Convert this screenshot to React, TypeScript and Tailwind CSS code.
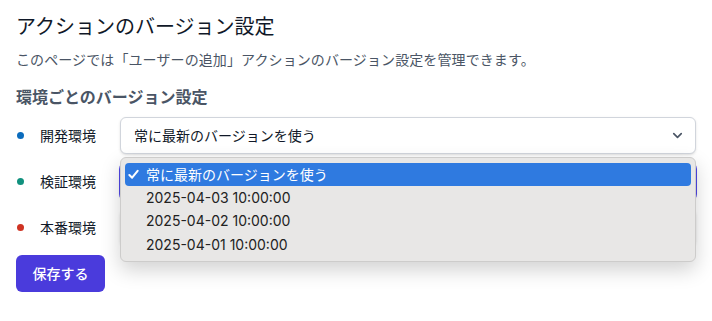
import { ChevronDown } from "lucide-react";

const envs = [
  { name: "開発環境", dot: "bg-[#0b6cbd]" },
  { name: "検証環境", dot: "bg-[#11917e]" },
  { name: "本番環境", dot: "bg-[#cf3323]" },
];

const options = [
  "常に最新のバージョンを使う",
  "2025-04-03 10:00:00",
  "2025-04-02 10:00:00",
  "2025-04-01 10:00:00",
];

export default function App() {
  return (
    <div className="w-[712px] h-[321px] bg-white px-4 pt-[13px] font-['Inter','Noto_Sans_CJK_JP',sans-serif] text-gray-900">
      <h1 className="text-xl leading-7 text-gray-900">アクションのバージョン設定</h1>
      <p className="mt-[9px] text-sm leading-5 text-gray-600 tracking-[0.1px]">
        このページでは「ユーザーの追加」アクションのバージョン設定を管理できます。
      </p>
      <h2 className="mt-[15px] text-base leading-6 font-bold text-gray-600">環境ごとのバージョン設定</h2>

      {/* Environment rows */}
      <div className="relative mt-2 flex flex-col gap-[9px]">
        {envs.map((env, i) => (
          <div key={env.name} className="flex items-center h-[37px]">
            <span className={`w-[7px] h-[7px] rounded-full ml-px ${env.dot}`}></span>
            <span className="ml-[16px] w-[80px] text-sm">{env.name}</span>
            <div
              className={`flex-1 h-[37px] flex items-center justify-between pl-[13px] pr-[10px] rounded-md bg-white text-sm shadow-sm border ${
                i === 1 ? "border-[#4f46e5] ring-1 ring-[#4f46e5]" : "border-gray-300"
              }`}
            >
              <span>常に最新のバージョンを使う</span>
              <ChevronDown className="w-[15px] h-[15px] text-gray-600" strokeWidth={2.6} />
            </div>
          </div>
        ))}

        {/* Open native-style dropdown */}
        <div className="absolute left-[104px] top-[40px] w-[576px] rounded-[6px] bg-[#e8e7e6] border border-[#cdcccb] shadow-[0_8px_20px_rgba(0,0,0,0.18)] px-[4px] py-[5px] text-sm text-[#222]">
          {options.map((opt, i) => (
            <div
              key={opt}
              className={`flex items-center h-[23.3px] rounded-[4px] ${
                i === 0 ? "bg-[#2f7ae0] text-white" : ""
              }`}
            >
              <span className="w-[21px] pl-[3px] flex items-center">
                {i === 0 && (
                  <svg width="11" height="11" viewBox="0 0 12 12" fill="none">
                    <path d="M1.5 6.5 L4.5 9.5 L10.5 2" stroke="currentColor" strokeWidth="2.2" strokeLinecap="round" strokeLinejoin="round" />
                  </svg>
                )}
              </span>
              <span>{opt}</span>
            </div>
          ))}
        </div>
      </div>

      <button className="mt-[9px] h-[37px] w-[89px] rounded-md bg-[#4a3bdc] text-white text-sm font-medium">
        保存する
      </button>
    </div>
  );
}
